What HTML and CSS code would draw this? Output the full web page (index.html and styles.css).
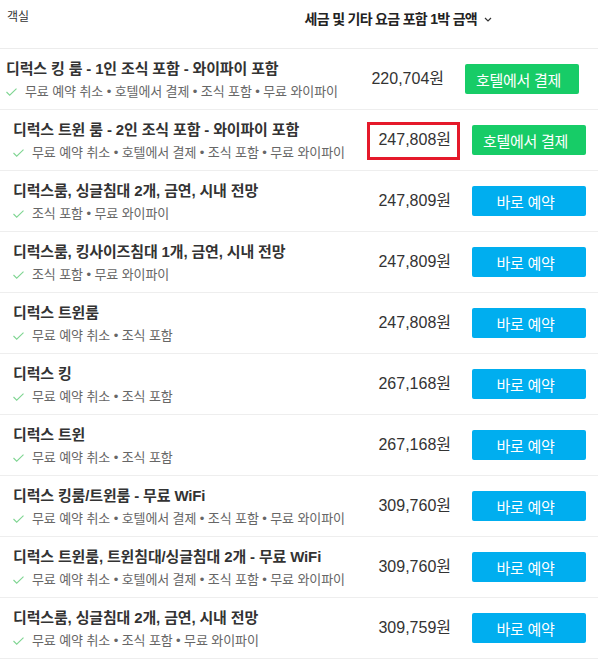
FILE: index.html
```html
<!DOCTYPE html>
<html lang="ko">
<head>
<meta charset="utf-8">
<link rel="stylesheet" href="styles.css">
</head>
<body>
<div class="rooms">
  <div class="rooms__head">
    <span class="rooms__label">객실</span>
    <span class="rooms__sort">세금 및 기타 요금 포함 1박 금액
      <svg class="rooms__chev" viewBox="0 0 8 5" width="8" height="5"><path d="M1 1l3 3 3-3" fill="none" stroke="#333" stroke-width="1.2"/></svg>
    </span>
  </div>
  <ul class="room-list">
    <li class="room room--shift">
      <div class="room__info">
        <div class="room__name">디럭스 킹 룸 - 1인 조식 포함 - 와이파이 포함</div>
        <div class="room__perks"><svg class="room__check" viewBox="0 0 11 8" width="11" height="8"><path d="M0.5 4l3.2 3.2L10.5 0.6" fill="none" stroke="#7fd592" stroke-width="1.1"/></svg><span>무료 예약 취소 • 호텔에서 결제 • 조식 포함 • 무료 와이파이</span></div>
      </div>
      <span class="room__price">220,704원</span>
      <a class="room__btn room__btn--hotel">호텔에서 결제</a>
    </li>
    <li class="room">
      <div class="room__info">
        <div class="room__name">디럭스 트윈 룸 - 2인 조식 포함 - 와이파이 포함</div>
        <div class="room__perks"><svg class="room__check" viewBox="0 0 11 8" width="11" height="8"><path d="M0.5 4l3.2 3.2L10.5 0.6" fill="none" stroke="#7fd592" stroke-width="1.1"/></svg><span>무료 예약 취소 • 호텔에서 결제 • 조식 포함 • 무료 와이파이</span></div>
      </div>
      <span class="room__price room__price--marked">247,808원</span>
      <a class="room__btn room__btn--hotel">호텔에서 결제</a>
    </li>
    <li class="room">
      <div class="room__info">
        <div class="room__name">디럭스룸, 싱글침대 2개, 금연, 시내 전망</div>
        <div class="room__perks"><svg class="room__check" viewBox="0 0 11 8" width="11" height="8"><path d="M0.5 4l3.2 3.2L10.5 0.6" fill="none" stroke="#7fd592" stroke-width="1.1"/></svg><span>조식 포함 • 무료 와이파이</span></div>
      </div>
      <span class="room__price">247,809원</span>
      <a class="room__btn">바로 예약</a>
    </li>
    <li class="room">
      <div class="room__info">
        <div class="room__name">디럭스룸, 킹사이즈침대 1개, 금연, 시내 전망</div>
        <div class="room__perks"><svg class="room__check" viewBox="0 0 11 8" width="11" height="8"><path d="M0.5 4l3.2 3.2L10.5 0.6" fill="none" stroke="#7fd592" stroke-width="1.1"/></svg><span>조식 포함 • 무료 와이파이</span></div>
      </div>
      <span class="room__price">247,809원</span>
      <a class="room__btn">바로 예약</a>
    </li>
    <li class="room">
      <div class="room__info">
        <div class="room__name">디럭스 트윈룸</div>
        <div class="room__perks"><svg class="room__check" viewBox="0 0 11 8" width="11" height="8"><path d="M0.5 4l3.2 3.2L10.5 0.6" fill="none" stroke="#7fd592" stroke-width="1.1"/></svg><span>무료 예약 취소 • 조식 포함</span></div>
      </div>
      <span class="room__price">247,808원</span>
      <a class="room__btn">바로 예약</a>
    </li>
    <li class="room">
      <div class="room__info">
        <div class="room__name">디럭스 킹</div>
        <div class="room__perks"><svg class="room__check" viewBox="0 0 11 8" width="11" height="8"><path d="M0.5 4l3.2 3.2L10.5 0.6" fill="none" stroke="#7fd592" stroke-width="1.1"/></svg><span>무료 예약 취소 • 조식 포함</span></div>
      </div>
      <span class="room__price">267,168원</span>
      <a class="room__btn">바로 예약</a>
    </li>
    <li class="room">
      <div class="room__info">
        <div class="room__name">디럭스 트윈</div>
        <div class="room__perks"><svg class="room__check" viewBox="0 0 11 8" width="11" height="8"><path d="M0.5 4l3.2 3.2L10.5 0.6" fill="none" stroke="#7fd592" stroke-width="1.1"/></svg><span>무료 예약 취소 • 조식 포함</span></div>
      </div>
      <span class="room__price">267,168원</span>
      <a class="room__btn">바로 예약</a>
    </li>
    <li class="room">
      <div class="room__info">
        <div class="room__name">디럭스 킹룸/트윈룸 - 무료 WiFi</div>
        <div class="room__perks"><svg class="room__check" viewBox="0 0 11 8" width="11" height="8"><path d="M0.5 4l3.2 3.2L10.5 0.6" fill="none" stroke="#7fd592" stroke-width="1.1"/></svg><span>무료 예약 취소 • 호텔에서 결제 • 조식 포함 • 무료 와이파이</span></div>
      </div>
      <span class="room__price">309,760원</span>
      <a class="room__btn">바로 예약</a>
    </li>
    <li class="room">
      <div class="room__info">
        <div class="room__name">디럭스 트윈룸, 트윈침대/싱글침대 2개 - 무료 WiFi</div>
        <div class="room__perks"><svg class="room__check" viewBox="0 0 11 8" width="11" height="8"><path d="M0.5 4l3.2 3.2L10.5 0.6" fill="none" stroke="#7fd592" stroke-width="1.1"/></svg><span>무료 예약 취소 • 호텔에서 결제 • 조식 포함 • 무료 와이파이</span></div>
      </div>
      <span class="room__price">309,760원</span>
      <a class="room__btn">바로 예약</a>
    </li>
    <li class="room">
      <div class="room__info">
        <div class="room__name">디럭스룸, 싱글침대 2개, 금연, 시내 전망</div>
        <div class="room__perks"><svg class="room__check" viewBox="0 0 11 8" width="11" height="8"><path d="M0.5 4l3.2 3.2L10.5 0.6" fill="none" stroke="#7fd592" stroke-width="1.1"/></svg><span>무료 예약 취소 • 조식 포함 • 무료 와이파이</span></div>
      </div>
      <span class="room__price">309,759원</span>
      <a class="room__btn">바로 예약</a>
    </li>
  </ul>
</div>
</body>
</html>
```
FILE: styles.css
```css
* { box-sizing: border-box; }
html, body { margin: 0; padding: 0; background: #fff; }
body {
  font-family: "Liberation Sans", "Noto Sans CJK KR", sans-serif;
  color: #333;
}
.rooms { width: 598px; }
.rooms__head {
  height: 49px;
  border-bottom: 1px solid #ececec;
  display: flex;
  justify-content: space-between;
  align-items: flex-start;
  padding: 8px 106px 0 7px;
}
.rooms__label { font-size: 12px; line-height: 18px; color: #333; }
.rooms__sort {
  font-size: 14px;
  line-height: 22px;
  font-weight: bold;
  color: #222;
  letter-spacing: -0.7px;
  display: flex;
  align-items: center;
  gap: 7px;
}
.rooms__chev { display: block; }
.room-list { list-style: none; margin: 0; padding: 0; }
.room {
  height: 61px;
  border-bottom: 1px solid #eeeeee;
  display: flex;
  align-items: center;
  padding: 0 12px 0 13px;
  gap: 21px;
}
.room--shift { padding: 0 19px 0 6px; }
.room__info { flex: 1; min-width: 0; }
.room__name {
  font-size: 15px;
  line-height: 22px;
  font-weight: bold;
  color: #333;
  white-space: nowrap;
  letter-spacing: -0.15px;
}
.room__perks {
  display: flex;
  align-items: center;
  gap: 8px;
  margin-top: 4px;
  font-size: 13px;
  line-height: 16px;
  color: #666;
  white-space: nowrap;
  letter-spacing: -0.1px;
}
.room__check { display: block; flex: none; }
.room__price {
  font-size: 16px;
  line-height: 20px;
  color: #333;
  white-space: nowrap;
  position: relative;
}
.room__price--marked::after {
  content: "";
  position: absolute;
  left: -11px;
  right: -9px;
  top: -8px;
  bottom: -10px;
  border: 3px solid #e5192a;
}
.room__btn {
  flex: none;
  width: 114px;
  height: 30px;
  border-radius: 2px;
  background: #00aeef;
  color: #fff;
  font-size: 15px;
  letter-spacing: -0.3px;
  display: flex;
  align-items: center;
  justify-content: center;
  padding-right: 7px;
}
.room__btn--hotel { background: #17cc67; }
```
